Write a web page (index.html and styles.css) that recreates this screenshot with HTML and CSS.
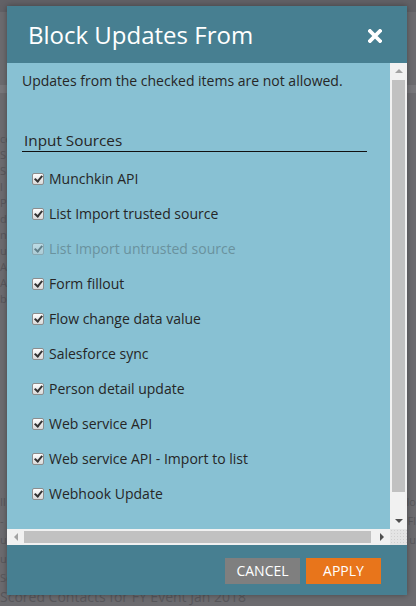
FILE: index.html
```html
<!DOCTYPE html>
<html>
<head>
<meta charset="utf-8">
<link rel="stylesheet" href="styles.css">
</head>
<body>
<div class="page">
  <div class="topbar"></div>
  <div class="band"></div>
  <div class="bg-lines">
    <div class="bg-line">ce</div>
    <div class="bg-line">S</div>
    <div class="bg-line">S</div>
    <div class="bg-line">l</div>
    <div class="bg-line">P</div>
    <div class="bg-line">d</div>
    <div class="bg-line">n</div>
    <div class="bg-line">u</div>
    <div class="bg-line">Al</div>
    <div class="bg-line">Al</div>
    <div class="bg-line">b</div>
  </div>
  <div class="bg-bottom">
    <div class="bg-row"><span>Il</span><span>lo</span></div>
    <div class="bg-row"><span>-</span><span>Fl</span></div>
    <div class="bg-row"><span>u</span><span>u</span></div>
    <div class="bg-row"><span>u</span><span></span></div>
    <div class="bg-row"><span>Sc</span><span></span></div>
    <div class="bg-row last"><span>Scored Contacts for FY Event Jan 2018</span><span></span></div>
  </div>
</div>

<div class="dialog">
  <div class="header">
    <div class="title">Block Updates From</div>
    <svg class="close" width="14" height="14" viewBox="0 0 14 14"><path d="M2 2 L12 12 M12 2 L2 12" stroke="#fff" stroke-width="3.8" stroke-linecap="square"/></svg>
  </div>
  <div class="body">
    <div class="content">
      <div class="intro">Updates from the checked items are not allowed.</div>
      <div class="section-title">Input Sources</div>
      <div class="list">
        <label class="item"><span class="cb"></span><span>Munchkin API</span></label>
        <label class="item"><span class="cb"></span><span>List Import trusted source</span></label>
        <label class="item disabled"><span class="cb"></span><span>List Import untrusted source</span></label>
        <label class="item"><span class="cb"></span><span>Form fillout</span></label>
        <label class="item"><span class="cb"></span><span>Flow change data value</span></label>
        <label class="item"><span class="cb"></span><span>Salesforce sync</span></label>
        <label class="item"><span class="cb"></span><span>Person detail update</span></label>
        <label class="item"><span class="cb"></span><span>Web service API</span></label>
        <label class="item"><span class="cb"></span><span>Web service API - Import to list</span></label>
        <label class="item"><span class="cb"></span><span>Webhook Update</span></label>
      </div>
    </div>
    <div class="vscroll">
      <div class="sbtn"><span class="arrow up dim"></span></div>
      <div class="vthumb"></div>
      <div class="vtrack"></div>
      <div class="sbtn"><span class="arrow down"></span></div>
    </div>
    <div class="hscroll">
      <div class="sbtn"><span class="arrow left dim"></span></div>
      <div class="hthumb"></div>
      <div class="sbtn"><span class="arrow right"></span></div>
    </div>
    <div class="corner"></div>
  </div>
  <div class="footer">
    <button class="btn cancel">CANCEL</button>
    <button class="btn apply">APPLY</button>
  </div>
</div>
</body>
</html>
```
FILE: styles.css
```css
* { box-sizing: border-box; }
html, body { margin: 0; padding: 0; }
body {
  width: 416px;
  height: 606px;
  overflow: hidden;
  position: relative;
  font-family: "Open Sans", "DejaVu Sans", sans-serif;
  background: #6c6b6f;
}
.page {
  height: 606px;
  display: flex;
  flex-direction: column;
  color: #58575b;
  font-size: 11px;
}
.topbar { height: 12px; background: #626166; }
.band { height: 8px; margin-top: 73px; background: #78777b; }
.bg-lines {
  margin-top: 38px;
  display: flex;
  flex-direction: column;
  line-height: 16px;
}
.bg-line { height: 16px; }
.bg-bottom {
  margin-top: auto;
  display: flex;
  flex-direction: column;
  line-height: 19px;
}
.bg-row { display: flex; justify-content: space-between; height: 19px; }
.bg-row.last { font-size: 14px; }

.dialog {
  position: absolute;
  left: 7px;
  top: 6px;
  width: 400px;
  height: 589px;
  display: flex;
  flex-direction: column;
  box-shadow: 0 0 6px rgba(0,0,0,0.35);
}
.header {
  height: 57px;
  background: #477f91;
  display: flex;
  align-items: center;
  justify-content: space-between;
  padding: 0 25px 0 21px;
}
.title {
  color: #fff;
  font-size: 24px;
  line-height: 32px;
  padding-top: 1px;
}
.close { margin-top: 2px; }

.body {
  height: 482px;
  display: grid;
  grid-template-columns: 383px 17px;
  grid-template-rows: 466px 16px;
  background: #88c1d3;
}
.content {
  padding: 8px 23px 0 15px;
  color: #262626;
  font-size: 14px;
  overflow: hidden;
}
.intro { line-height: 20px; }
.section-title {
  margin-top: 39px;
  font-size: 15.3px;
  line-height: 21px;
  padding: 0 0 0 2px;
  border-bottom: 1px solid #111;
}
.list {
  margin-top: 9px;
  display: flex;
  flex-direction: column;
}
.item {
  height: 35px;
  display: flex;
  align-items: center;
  gap: 5px;
  padding-left: 10px;
  line-height: 19px;
}
.cb {
  width: 12px;
  height: 12px;
  border: 1px solid #8d8d8d;
  border-radius: 2px;
  background: linear-gradient(#fdfdfd, #d9d9d9);
  position: relative;
  flex: none;
  margin-top: 1px;
}
.cb::after {
  content: "";
  position: absolute;
  left: 3px;
  top: 0px;
  width: 3px;
  height: 6px;
  border-right: 2px solid #333;
  border-bottom: 2px solid #333;
  transform: rotate(40deg);
}
.item.disabled { color: #6a929e; }
.item.disabled .cb { opacity: 0.45; }

.vscroll {
  background: #f1f1f1;
  display: flex;
  flex-direction: column;
}
.sbtn {
  width: 17px;
  height: 17px;
  flex: none;
  display: flex;
  align-items: center;
  justify-content: center;
}
.vthumb {
  height: 412px;
  margin: 0 2px;
  background: #c1c1c1;
}
.vtrack { flex: 1; }
.hscroll {
  background: #f1f1f1;
  display: flex;
  align-items: center;
}
.hscroll .sbtn { height: 16px; }
.hthumb {
  width: 347px;
  height: 12px;
  background: #c1c1c1;
}
.hscroll .sbtn:last-child { margin-left: auto; }
.corner {
  background: #e4e4e4;
  background-image: radial-gradient(#d0d0d0 0.6px, transparent 0.8px);
  background-size: 3px 3px;
}
.arrow { width: 0; height: 0; border: 4px solid transparent; }
.arrow.up { border-bottom: 4px solid #505050; border-top: 0; margin-top: -1px; }
.arrow.down { border-top: 4px solid #505050; border-bottom: 0; }
.arrow.left { border-right: 4px solid #505050; border-left: 0; }
.arrow.right { border-left: 4px solid #505050; border-right: 0; }
.arrow.up.dim { border-bottom-color: #a3a3a3; }
.arrow.left.dim { border-right-color: #a3a3a3; }

.footer {
  flex: 1;
  background: #477f91;
  display: flex;
  justify-content: flex-end;
  align-items: flex-start;
  gap: 6px;
  padding: 13px 26px 0 0;
}
.btn {
  width: 75px;
  height: 26px;
  border: 0;
  color: #fff;
  font-family: "Open Sans", "DejaVu Sans", sans-serif;
  font-size: 14px;
  padding: 0;
  line-height: 26px;
}
.cancel { background: #7f7f7f; }
.apply { background: #e8751b; }
```
